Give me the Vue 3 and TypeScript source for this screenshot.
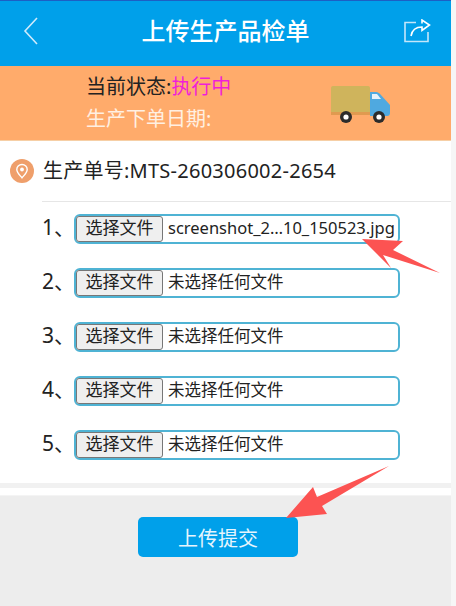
<template>
  <div class="page">
    <div class="column">
      <header class="nav">
        <svg class="back" width="18" height="30" viewBox="0 0 18 30">
          <path d="M15 2 L3 15 L15 28" fill="none" stroke="#cfeafb" stroke-width="1.6" />
        </svg>
        <h1 class="title">上传生产品检单</h1>
        <svg class="share" width="28" height="24" viewBox="0 0 28 24">
          <path d="M13 3.5 H2 V22.5 H25 V13" fill="none" stroke="#c4e6fa" stroke-width="1.6" />
          <path d="M8 17 C9 11 13 8 19 8 V11.5 L26.5 6 L19 1 V4.5" fill="none" stroke="#fff" stroke-width="1.6" />
        </svg>
      </header>

      <section class="status">
        <div class="status-text">
          <div class="status-line">当前状态:<span class="running">执行中</span></div>
          <div class="status-line date">生产下单日期:</div>
        </div>
        <svg class="truck" width="62" height="38" viewBox="0 0 62 38">
          <rect x="1" y="1" width="39" height="29" rx="2" fill="#cfb45c" />
          <rect x="1" y="27" width="39" height="3" fill="#e09a50" />
          <path d="M40 7 H46 C48 7 49 8 50 9 L60 20 V28 C60 30 59 31 57 31 H40 Z" fill="#4fa9e0" />
          <path d="M42 9 H47 L51 14 H42 Z" fill="#e6f2fb" />
          <circle cx="16" cy="32" r="6" fill="#2b2b2b" />
          <circle cx="16" cy="32" r="2.6" fill="#fff" />
          <circle cx="49" cy="32" r="6" fill="#2b2b2b" />
          <circle cx="49" cy="32" r="2.6" fill="#fff" />
        </svg>
      </section>

      <main class="content">
        <div class="order">
          <svg class="pin" width="24" height="24" viewBox="0 0 24 24">
            <circle cx="12" cy="12" r="12" fill="#ef9f6b" />
            <path d="M12 5.5 C8.8 5.5 6.8 8 6.8 10.4 C6.8 13.6 10 16.4 12 18.8 C14 16.4 17.2 13.6 17.2 10.4 C17.2 8 15.2 5.5 12 5.5 Z" fill="none" stroke="#fff" stroke-width="1.4" />
            <circle cx="12" cy="10.5" r="1.9" fill="#fff" />
          </svg>
          <span class="order-text">生产单号:MTS-260306002-2654</span>
        </div>
        <div class="files">
          <div v-for="row in rows" :key="row.no" class="file-row">
            <span class="file-no">{{ row.no }}、</span>
            <div class="file-box">
              <button class="file-btn" type="button">选择文件</button>
              <span class="file-name">{{ row.name }}</span>
            </div>
          </div>
        </div>
      </main>

      <div class="strip"></div>

      <footer class="footer">
        <button class="submit" type="button">上传提交</button>
      </footer>
    </div>

    <svg class="arrows" width="456" height="606" viewBox="0 0 456 606">
      <polygon points="362,239 403,241 393,250 440,273 383,255 391,268" fill="#fc5352" />
      <polygon points="286,518 313,487 317,497 389,466 322,506 327,514" fill="#fc5352" />
    </svg>
  </div>
</template>

<script setup lang="ts">
interface FileRow {
  no: number
  name: string
}

const rows: FileRow[] = [
  { no: 1, name: 'screenshot_2…10_150523.jpg' },
  { no: 2, name: '未选择任何文件' },
  { no: 3, name: '未选择任何文件' },
  { no: 4, name: '未选择任何文件' },
  { no: 5, name: '未选择任何文件' }
]
</script>

<style>
html,
body {
  margin: 0;
  background: #f6f6f6;
}
</style>

<style scoped>
.page {
  position: relative;
  width: 456px;
  height: 606px;
  overflow: hidden;
  background: #f6f6f6;
  font-family: "Noto Sans", "Noto Sans CJK SC", sans-serif;
  color: #222;
}

.column {
  display: flex;
  flex-direction: column;
  width: 451px;
  height: 606px;
}

.nav {
  display: flex;
  align-items: center;
  justify-content: space-between;
  box-sizing: border-box;
  height: 66px;
  padding: 0 20px 5px 22px;
  border-top: 1px solid #1c5fc4;
  background: #00a0ea;
}

.back {
  margin-right: 8px;
}

.title {
  margin: 0;
  font-size: 24px;
  line-height: 30px;
  font-weight: 500;
  color: #fff;
}

.status {
  display: flex;
  align-items: center;
  justify-content: space-between;
  box-sizing: border-box;
  height: 75px;
  padding: 0 59px 0 86px;
  border-bottom: 1px solid #f6cfa6;
  background: #ffab6b;
}

.status-line {
  height: 32px;
  line-height: 32px;
  font-size: 20px;
}

.running {
  color: #f01fd8;
}

.date {
  color: #fff0e2;
}

.truck {
  margin-top: 2px;
}

.content {
  box-sizing: border-box;
  height: 342px;
  background: #fff;
}

.order {
  display: flex;
  align-items: center;
  gap: 9px;
  height: 60px;
  padding-left: 10px;
  font-size: 20px;
}

.order-text {
  line-height: 24px;
  letter-spacing: 0.25px;
}

.files {
  margin-left: 42px;
  padding-top: 12px;
  border-top: 1px solid #e6e6e6;
}

.file-row {
  display: flex;
  align-items: center;
  height: 30px;
  margin-bottom: 24px;
}

.file-no {
  width: 32px;
  font-size: 21px;
  line-height: 26px;
  padding-bottom: 4px;
}

.file-box {
  display: flex;
  align-items: center;
  box-sizing: border-box;
  width: 326px;
  height: 30px;
  border: 2px solid #4fb3d4;
  border-radius: 6px;
  background: #fff;
}

.file-btn {
  box-sizing: border-box;
  width: 87px;
  height: 26px;
  padding: 0 0 2px;
  border: 1px solid #777;
  border-radius: 3px;
  background: #efefef;
  font-family: inherit;
  font-size: 17px;
  line-height: 22px;
  color: #222;
}

.file-name {
  margin-left: 5px;
  font-size: 16.5px;
  line-height: 22px;
  padding-bottom: 2px;
  white-space: nowrap;
}

.strip {
  box-sizing: border-box;
  height: 13px;
  border-top: 5px solid #f1f1f1;
  border-bottom: 1px solid #f4f4f4;
  background: #fff;
}

.footer {
  flex: 1;
  display: flex;
  justify-content: center;
  align-items: flex-start;
  padding: 21px 15px 0 0;
  background: #ededed;
}

.submit {
  width: 160px;
  height: 40px;
  padding: 0;
  border: 0;
  border-radius: 5px;
  background: #00a0ea;
  font-family: inherit;
  font-size: 20px;
  color: #e6f5fd;
}

.arrows {
  position: absolute;
  top: 0;
  left: 0;
  pointer-events: none;
}
</style>
